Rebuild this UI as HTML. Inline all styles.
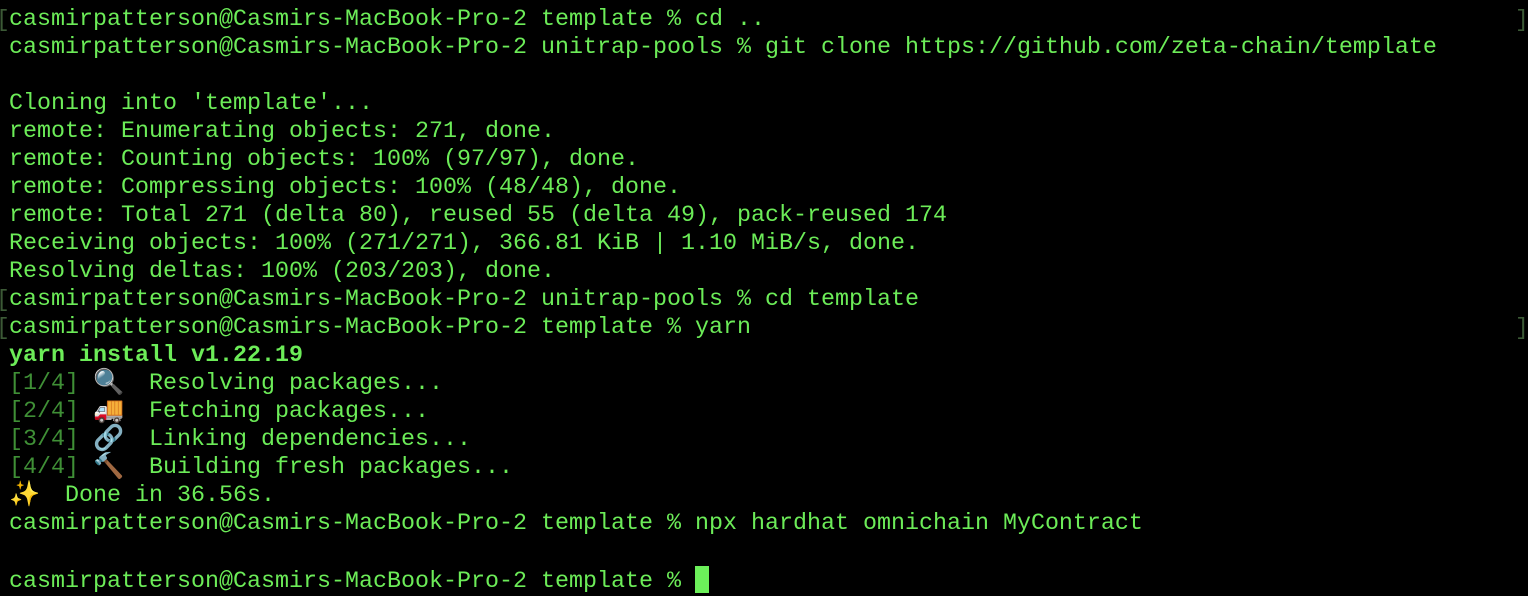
<!DOCTYPE html>
<html><head><meta charset="utf-8"><style>
html,body{margin:0;padding:0;background:#000;width:1528px;height:596px;overflow:hidden}
.t{position:absolute;left:9px;top:6px;font-family:"Liberation Mono",monospace;font-size:23.33px;line-height:28px;color:#6cec58}
.l{height:28px;white-space:pre}
.b{font-weight:bold}
.d{color:#3f8f36}
.e{display:inline-block;width:28px;text-align:center;font-size:25px;line-height:28px;vertical-align:top}
.br{position:absolute;color:#3c5a36;font-family:"Liberation Mono",monospace;font-size:23px;line-height:28px}
.cur{display:inline-block;width:14px;height:27px;background:#6cf05a;vertical-align:-6px}
</style></head><body>
<div class="br" style="left:-4px;top:6px">[</div>
<div class="br" style="left:-4px;top:286px">[</div>
<div class="br" style="left:-4px;top:314px">[</div>
<div class="br" style="left:1515px;top:6px">]</div>
<div class="br" style="left:1515px;top:314px">]</div>
<div class="t"><div class="l">casmirpatterson@Casmirs-MacBook-Pro-2 template % cd ..</div><div class="l">casmirpatterson@Casmirs-MacBook-Pro-2 unitrap-pools % git clone https://github.com/zeta-chain/template</div><div class="l"></div><div class="l">Cloning into 'template'...</div><div class="l">remote: Enumerating objects: 271, done.</div><div class="l">remote: Counting objects: 100% (97/97), done.</div><div class="l">remote: Compressing objects: 100% (48/48), done.</div><div class="l">remote: Total 271 (delta 80), reused 55 (delta 49), pack-reused 174</div><div class="l">Receiving objects: 100% (271/271), 366.81 KiB | 1.10 MiB/s, done.</div><div class="l">Resolving deltas: 100% (203/203), done.</div><div class="l">casmirpatterson@Casmirs-MacBook-Pro-2 unitrap-pools % cd template</div><div class="l">casmirpatterson@Casmirs-MacBook-Pro-2 template % yarn</div><div class="l b">yarn install v1.22.19</div><div class="l"><span class="d">[1/4]</span> <span class="e">🔍</span>  Resolving packages...</div><div class="l"><span class="d">[2/4]</span> <span class="e">🚚</span>  Fetching packages...</div><div class="l"><span class="d">[3/4]</span> <span class="e">🔗</span>  Linking dependencies...</div><div class="l"><span class="d">[4/4]</span> <span class="e">🔨</span>  Building fresh packages...</div><div class="l"><span class="e">✨</span>  Done in 36.56s.</div><div class="l">casmirpatterson@Casmirs-MacBook-Pro-2 template % npx hardhat omnichain MyContract</div><div class="l"></div><div class="l">casmirpatterson@Casmirs-MacBook-Pro-2 template % <span class="cur"></span></div></div>
</body></html>
